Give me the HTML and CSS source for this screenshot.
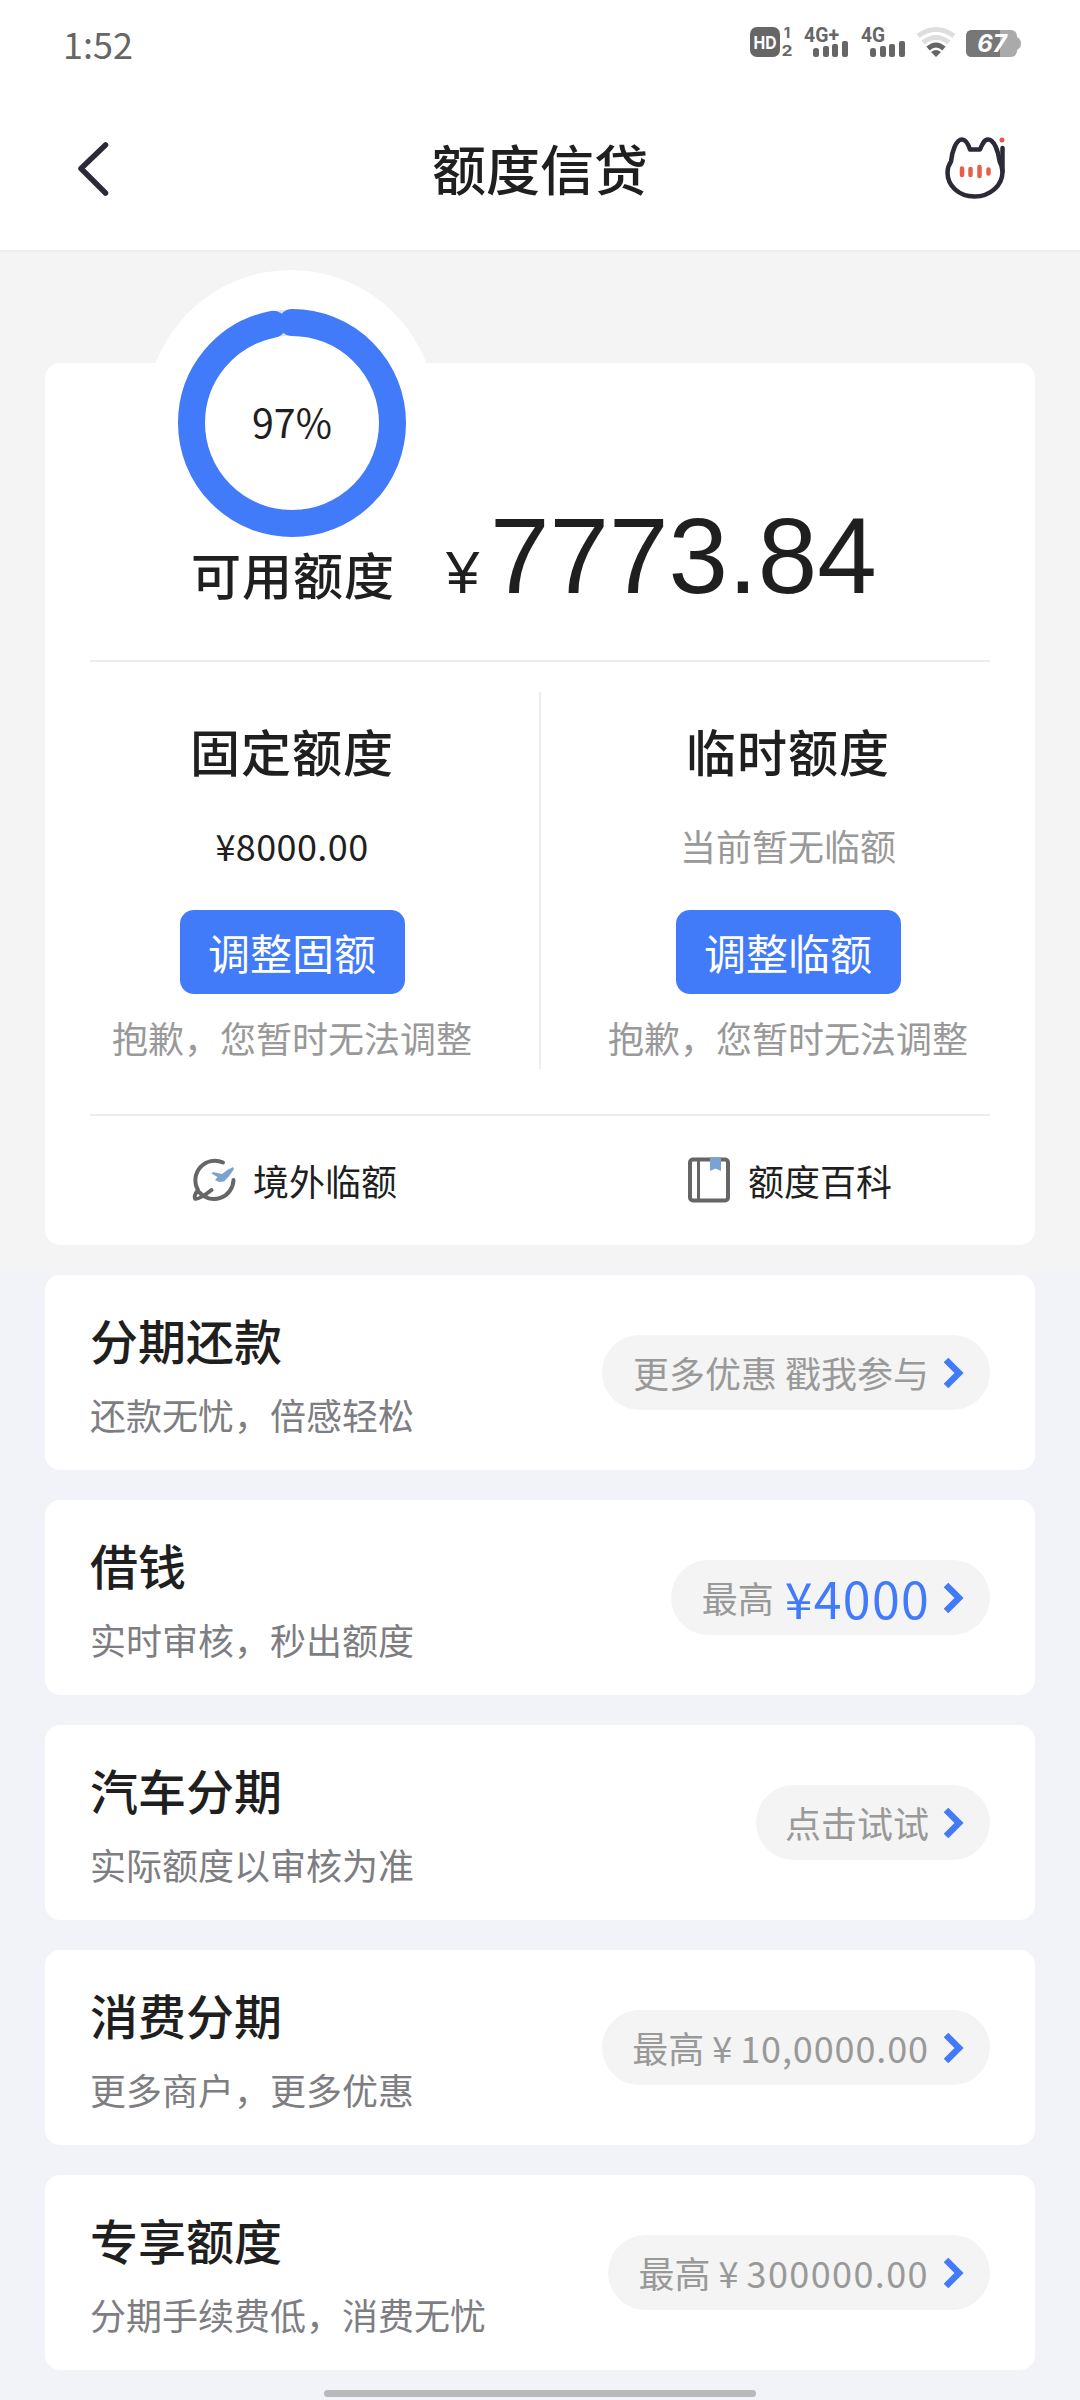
FILE: index.html
```html
<!DOCTYPE html>
<html lang="zh-CN">
<head>
<meta charset="utf-8">
<title>额度信贷</title>
<link rel="stylesheet" href="styles.css">
</head>
<body>
<div class="status">
  <span class="clock">1:52</span>
  <svg class="status-icons" width="276" height="40" viewBox="744 22 276 40">
    <rect x="750" y="27" width="30" height="30" rx="7" fill="#666"/>
    <text x="765" y="49" class="s-hd" text-anchor="middle" textLength="23" lengthAdjust="spacingAndGlyphs">HD</text>
    <text x="787" y="38" class="s-sim" text-anchor="middle">1</text>
    <text x="787" y="56" class="s-sim" text-anchor="middle" textLength="11" lengthAdjust="spacingAndGlyphs">2</text>
    <text x="804" y="42" class="s-net" textLength="35" lengthAdjust="spacingAndGlyphs">4G+</text>
    <text x="861" y="42" class="s-net" textLength="24" lengthAdjust="spacingAndGlyphs">4G</text>
    <g fill="#666">
      <rect x="813" y="48" width="6" height="9" rx="2.5"/><rect x="823" y="46" width="6" height="11" rx="2"/><rect x="832" y="44" width="6" height="13" rx="2"/><rect x="842" y="41" width="6" height="16" rx="2"/>
      <rect x="870" y="48" width="6" height="9" rx="2.5"/><rect x="880" y="46" width="6" height="11" rx="2"/><rect x="889" y="44" width="6" height="13" rx="2"/><rect x="899" y="41" width="6" height="16" rx="2"/>
      <path d="M931 52q5-4 10 0l-5 5z"/>
    </g>
    <g fill="none" stroke-width="5">
      <path d="M918 36q18-13 36 0" stroke="#dedede"/>
      <path d="M923 42.500q13-10 26 0" stroke="#dedede"/>
      <path d="M928 48.500q8-7 16 0" stroke="#666"/>
    </g>
    <rect x="966" y="30" width="51" height="27" rx="6" fill="#aaa"/>
    <path d="M1017 37q4 2 4 6.500t-4 6.500z" fill="#aaa"/>
    <path d="M1000 30h-28q-6 0-6 6v15q0 6 6 6h28z" fill="#777"/>
    <text x="992" y="52" class="s-bat" text-anchor="middle">67</text>
  </svg>
</div>
<header class="nav">
  <svg class="back" width="70" height="64" viewBox="0 0 70 64"><path d="M35.500 8L11 31.500l24.500 24.500"/></svg>
  <h1>额度信贷</h1>
  <svg class="cat" width="70" height="70" viewBox="940 134 70 70">
    <path d="M970 149.500h10c2-5 4-10 8-10 6 0 10 11 11.500 21.500 2 4 3 7 3 11 0 13-12 24.500-28 24.500s-27-11-27-24c0-4 1.500-8 3.500-11 1-10 5-22 11-22 4 0 6 4 8 10z" fill="none" stroke="#2b2a38" stroke-width="4.500" stroke-linejoin="round"/>
    <path d="M1002.500 148v23" fill="none" stroke="#2b2a38" stroke-width="4.500" stroke-linecap="round"/>
    <circle cx="1002" cy="140" r="2.500" fill="#e25b50"/>
    <g stroke="#e55f49" stroke-width="4.500" stroke-linecap="round"><path d="M962 168.500v6.500M970.500 169v6M979.500 167v9M988.500 169.500v4"/></g>
  </svg>
</header>
<main>
  <section class="overview">
    <div class="card quota">
      <div class="summary">
        <div class="gauge">
          <svg width="290" height="290" viewBox="0 0 290 290">
            <circle cx="145" cy="145" r="145" fill="#fff"/>
            <g transform="translate(1 0)"><circle cx="145" cy="153" r="100.500" fill="none" stroke="#d3e2fc" stroke-width="26"/>
            <circle cx="145" cy="153" r="100.500" fill="none" stroke="#417bf9" stroke-width="27" stroke-linecap="round" pathLength="100" stroke-dasharray="97 3" transform="rotate(-90 145 153)"/>
            <text x="145" y="168" text-anchor="middle" textLength="80" lengthAdjust="spacingAndGlyphs">97%</text></g>
          </svg>
        </div>
        <div class="label">可用额度</div>
        <div class="amount"><span class="yen">¥</span><span class="num">7773.84</span></div>
      </div>
      <div class="columns">
        <div class="col">
          <h2>固定额度</h2>
          <p class="value">¥8000.00</p>
          <button>调整固额</button>
          <p class="note">抱歉，您暂时无法调整</p>
        </div>
        <div class="col">
          <h2>临时额度</h2>
          <p class="value none">当前暂无临额</p>
          <button>调整临额</button>
          <p class="note">抱歉，您暂时无法调整</p>
        </div>
      </div>
      <div class="links">
        <a>
          <svg width="50" height="50" viewBox="188 1155 50 50"><g fill="none" stroke="#666" stroke-width="4" stroke-linecap="round" stroke-linejoin="round"><path d="M223 1162.500A19.500 19.500 0 0 0 198 1190q-4.500 6-3 8.500 3 2 16.500-8.500M233.500 1180A19.500 19.500 0 0 1 199 1192"/></g><path d="M233 1167Q228 1169 222 1174L213 1172l-1.500 1.500 6 3.500-2.500 3 4 2 5-.5Q230 1176 234 1169z" fill="#7aa3d1"/></svg>
          <span>境外临额</span>
        </a>
        <a>
          <svg width="50" height="50" viewBox="683 1155 50 50"><g fill="none" stroke="#666" stroke-width="4"><rect x="690" y="1159.500" width="38" height="41" rx="3"/><path d="M698.500 1159v42" stroke-width="3"/></g><path d="M710 1157h11v14l-5.500-2.500-5.500 2.500z" fill="#7aa3d1"/></svg>
          <span>额度百科</span>
        </a>
      </div>
    </div>
  </section>
  <section class="list">
    <div class="card item"><div><h3>分期还款</h3><p>还款无忧，倍感轻松</p></div><div class="pill" style="width:388px"><span>更多优惠 戳我参与</span><svg width="20" height="32" viewBox="0 0 20 32"><path d="M2 3L15 16 2 29"/></svg></div></div>
    <div class="card item"><div><h3>借钱</h3><p>实时审核，秒出额度</p></div><div class="pill" style="width:319px"><span class="limit"><span>最高</span><b>¥4000</b></span><svg width="20" height="32" viewBox="0 0 20 32"><path d="M2 3L15 16 2 29"/></svg></div></div>
    <div class="card item"><div><h3>汽车分期</h3><p>实际额度以审核为准</p></div><div class="pill" style="width:234px"><span>点击试试</span><svg width="20" height="32" viewBox="0 0 20 32"><path d="M2 3L15 16 2 29"/></svg></div></div>
    <div class="card item"><div><h3>消费分期</h3><p>更多商户，更多优惠</p></div><div class="pill" style="width:388px"><span>最高<i>¥</i><span class="sum">10,0000.00</span></span><svg width="20" height="32" viewBox="0 0 20 32"><path d="M2 3L15 16 2 29"/></svg></div></div>
    <div class="card item"><div><h3>专享额度</h3><p>分期手续费低，消费无忧</p></div><div class="pill" style="width:382px"><span>最高<i>¥</i><span class="sum wide">300000.00</span></span><svg width="20" height="32" viewBox="0 0 20 32"><path d="M2 3L15 16 2 29"/></svg></div></div>
  </section>
</main>
<div class="home"></div>
</body>
</html>
```
FILE: styles.css
```css
* { box-sizing: border-box; margin: 0; padding: 0; }
body { width: 1080px; height: 2400px; overflow: hidden; background: #f2f3f8; color: #1f1f1f; font-family: "Noto Sans CJK SC", sans-serif; }
svg { display: block; flex: none; overflow: visible; }
.status { height: 88px; background: #fff; display: flex; justify-content: space-between; align-items: flex-start; padding: 22px 60px 0 63px; }
.clock { font: 36px/42px "Noto Sans CJK SC", sans-serif; color: #666; }
.s-hd { font: bold 18px Inter, sans-serif; fill: #fff; }
.s-sim { font: bold 15px Inter, sans-serif; fill: #666; }
.s-net { font: bold 20px Roboto, sans-serif; fill: #666; }
.s-bat { font: italic bold 24px Inter, sans-serif; fill: #fff; }
.nav { height: 162px; background: #fff; display: flex; justify-content: space-between; align-items: center; padding: 0 70px; }
.back path { fill: none; stroke: #2b2a38; stroke-width: 5.5; stroke-linecap: round; stroke-linejoin: round; }
h1 { font-size: 54px; font-weight: 500; line-height: 80px; padding-bottom: 3px; }
.cat { margin-bottom: 0; }
.overview { background: #f4f4f4; border-top: 2px solid #ededed; height: 1022px; padding: 111px 45px 0; }
.card { background: #fff; border-radius: 15px; }
.quota { height: 882px; padding: 0 45px; }
.summary { position: relative; height: 299px; border-bottom: 2px solid #ededed; display: flex; align-items: flex-end; padding: 0 0 32px 101px; }
.gauge { position: absolute; left: 56px; top: -93px; }
.gauge text { font: 40px "Noto Sans CJK SC", sans-serif; fill: #1f1f1f; }
.label { position: relative; font-size: 50px; font-weight: 500; line-height: 74px; letter-spacing: 1px; margin-bottom: 18px; }
.amount { display: flex; align-items: baseline; margin-left: 51px; font-family: "Liberation Sans", sans-serif; line-height: 110px; }
.yen { font-size: 60px; width: 44px; }
.num { font-size: 107px; }
.columns { display: flex; height: 454px; border-bottom: 2px solid #ededed; position: relative; }
.columns::after { content: ""; position: absolute; left: 449px; top: 30px; width: 2px; height: 377px; background: #ededed; }
.col { flex: 1; display: flex; flex-direction: column; align-items: center; }
.col:first-child { margin: 0 23px 0 -23px; }
.col:last-child { margin: 0 -23px 0 23px; }
h2 { font-size: 50px; font-weight: 500; line-height: 74px; margin-top: 51px; letter-spacing: 1px; }
.value { font-size: 36px; line-height: 52px; margin-top: 32px; height: 52px; }
.col:first-child .value { letter-spacing: .4px; }
.none { color: #999; }
button { width: 225px; height: 84px; margin-top: 39px; border: 0; border-radius: 14px; background: #417bf9; color: #fff; font: 42px/82px "Noto Sans CJK SC", sans-serif; }
.note { font-size: 36px; line-height: 52px; color: #999; margin-top: 17px; }
.links { display: flex; height: 127px; }
.links a { width: 495px; flex: none; display: flex; align-items: center; gap: 15px; padding-left: 98px; font-size: 36px; }
.list { padding: 3px 45px 0; display: flex; flex-direction: column; gap: 30px; }
.item { height: 195px; padding: 28px 45px 0; display: flex; justify-content: space-between; }
h3 { font-size: 48px; font-weight: 500; line-height: 72px; }
.item p { font-size: 36px; line-height: 52px; color: #7d7d82; margin-top: 13px; }
.pill { height: 75px; margin-top: 32px; border-radius: 38px; background: #f4f4f4; display: flex; align-items: center; justify-content: flex-end; gap: 15px; padding-right: 26px; color: #999; font-size: 36px; white-space: nowrap; }
.pill > span { padding-bottom: 2px; }
.pill path { fill: none; stroke: #417bf9; stroke-width: 6.5; }
.limit { display: flex; align-items: center; gap: 11px; }
.pill b { font-size: 50px; font-weight: 400; color: #417bf9; line-height: 60px; letter-spacing: 1.3px; margin-right: -1px; }
.pill i { display: inline-block; width: 36px; text-align: center; font-style: normal; }
.sum { letter-spacing: .9px; }
.wide { letter-spacing: 1.4px; }
.home { width: 432px; height: 7px; margin: 20px auto 0; border-radius: 4px; background: #b9b9bb; }
```
